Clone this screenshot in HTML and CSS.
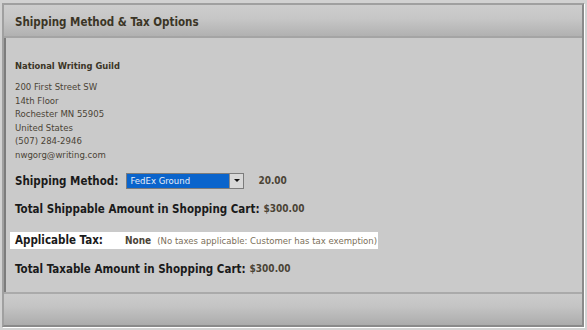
FILE: index.html
```html
<!DOCTYPE html>
<html>
<head>
<meta charset="utf-8">
<link rel="stylesheet" href="styles.css">
</head>
<body>
<div class="frame">
  <div class="panel">
    <div class="header">Shipping Method &amp; Tax Options</div>
    <div class="content">
      <div class="org">National Writing Guild</div>
      <div class="address">
        <div>200 First Street SW</div>
        <div>14th Floor</div>
        <div>Rochester MN 55905</div>
        <div>United States</div>
        <div>(507) 284-2946</div>
        <div>nwgorg@writing.com</div>
      </div>
      <div class="row ship-row">
        <span class="label">Shipping Method:</span>
        <span class="select"><span class="select-value">FedEx Ground</span><span class="select-btn"><span class="arrow"></span></span></span>
        <span class="amount">20.00</span>
      </div>
      <div class="row shippable-row">
        <span class="label">Total Shippable Amount in Shopping Cart:</span>
        <span class="amount">$300.00</span>
      </div>
      <div class="row tax-row">
        <span class="label tax-label">Applicable Tax:</span>
        <span class="amount">None</span>
        <span class="note">(No taxes applicable: Customer has tax exemption)</span>
      </div>
      <div class="row taxable-row">
        <span class="label">Total Taxable Amount in Shopping Cart:</span>
        <span class="amount">$300.00</span>
      </div>
    </div>
    <div class="footer"></div>
  </div>
</div>
</body>
</html>
```
FILE: styles.css
```css
html, body {
  margin: 0;
  padding: 0;
}
body {
  width: 587px;
  height: 330px;
  background: #d2d2d2;
  font-family: Tahoma, "DejaVu Sans Condensed", "DejaVu Sans", sans-serif;
  overflow: hidden;
}
.frame {
  padding: 3px 3px 3px 2px;
  height: 330px;
  box-sizing: border-box;
}
.panel {
  height: 100%;
  box-sizing: border-box;
  border-left: 2px solid #a0a0a0;
  border-top: 2px solid #a0a0a0;
  border-right: 2px solid #8a8a8a;
  border-bottom: 2px solid #8a8a8a;
  box-shadow: inset 2px 2px 0 #7c7c7c, 1px 1px 0 #ffffff;
  background: #cacaca;
  display: flex;
  flex-direction: column;
}
.header {
  height: 33px;
  box-sizing: border-box;
  padding: 2px 0 0 11px;
  display: flex;
  align-items: center;
  font-size: 11.5px;
  font-weight: bold;
  color: #3b3526;
  background: linear-gradient(#cdcdcd, #c6c6c6 45%, #b1b1b1);
  border-bottom: 2px solid #a4a4a4;
}
.content {
  flex: 1;
  padding: 22px 0 0 11px;
}
.org {
  font-size: 9.3px;
  font-weight: bold;
  color: #3b3526;
  height: 14px;
}
.address {
  margin-top: 6px;
  font-size: 9.5px;
  color: #4b4436;
  line-height: 13.6px;
}
.row {
  display: flex;
  align-items: center;
}
.label {
  font-size: 11.5px;
  font-weight: bold;
  color: #1a1a1a;
}
.amount {
  font-size: 10px;
  font-weight: bold;
  color: #4b4436;
}
.ship-row {
  margin-top: 11px;
  height: 16px;
}
.ship-row .label {
  margin-right: 8px;
}
.ship-row .amount {
  margin-left: 14px;
}
.select {
  display: flex;
  width: 118px;
  height: 16px;
  box-sizing: border-box;
  border: 1px solid #7c7c7c;
  background: #0a64cc;
}
.select-value {
  flex: 1;
  color: #e8eef8;
  font-size: 9.5px;
  line-height: 14px;
  padding-left: 3px;
}
.select-btn {
  width: 13px;
  background: #d8d8d8;
  border-left: 1px solid #8a8a8a;
  display: flex;
  align-items: center;
  justify-content: center;
}
.arrow {
  width: 0;
  height: 0;
  border-left: 3px solid transparent;
  border-right: 3px solid transparent;
  border-top: 3px solid #111;
}
.shippable-row {
  margin-top: 13px;
}
.shippable-row .label, .taxable-row .label {
  margin-right: 4px;
}
.tax-row {
  margin-top: 16px;
  margin-left: -5px;
  width: 368px;
  height: 17px;
  background: #ffffff;
  padding-left: 5px;
  box-sizing: border-box;
}
.tax-label {
  width: 110px;
}
.note {
  font-size: 9.5px;
  color: #7b6f5a;
  margin-left: 6px;
}
.taxable-row {
  margin-top: 13px;
}
.footer {
  height: 31px;
  border-top: 2px solid #aaaaaa;
  background: linear-gradient(#cbcbcb, #c4c4c4 40%, #acacac);
}
```
